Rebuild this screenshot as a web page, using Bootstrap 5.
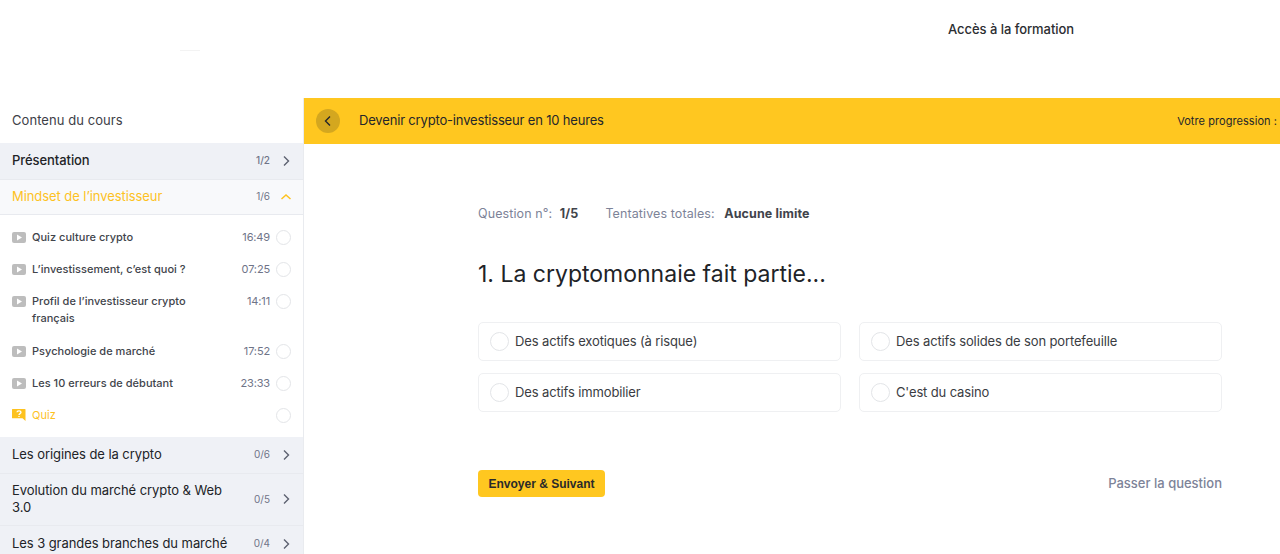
<!DOCTYPE html>
<html lang="fr">
<head>
<meta charset="utf-8">
<title>Quiz</title>
<link href="https://cdn.jsdelivr.net/npm/bootstrap@5.3.0/dist/css/bootstrap.min.css" rel="stylesheet">
<style>
html,body{height:100%;overflow:hidden;}
body{font-family:Inter,"Noto Sans",sans-serif;color:#212327;background:#fff;}
.top-head{height:98px;}
.logo-slot{width:304px;height:98px;}
.logo-mark{width:20px;height:1px;background:#f3f3f3;margin-left:180px;margin-top:50px;}
.access{margin-left:644px;margin-top:20px;font-size:13px;font-weight:500;line-height:18px;letter-spacing:-.05px;color:#2b2d31;}
.shell{height:456px;}
.side{width:304px;flex:none;border-right:1px solid #e9ebef;height:100%;overflow:hidden;}
.side-title{height:45px;padding-left:12px;font-size:13px;line-height:45px;letter-spacing:.06px;font-weight:400;color:#3d4047;}
.topic{background:#eff1f6;padding:0 12px;display:flex;align-items:center;border-bottom:1px solid #e8eaef;font-size:13px;line-height:17px;letter-spacing:-.07px;font-weight:400;color:#212327;}
.topic-name{flex:1;min-width:0;margin-top:-2px;}
.topic.one{height:37px;}
.topic.two{height:52px;}
.topic.first{height:37px;font-weight:500;}
.topic.open{height:35px;background:#f8f9fb;color:#fdc21f;}
.count{font-size:10px;color:#6f7488;width:28px;text-align:right;letter-spacing:0;margin-left:4px;margin-top:-1px;}
.chev{width:12px;height:12px;margin-left:10px;margin-right:-1px;margin-top:-1px;flex:none;}
.lessons{padding:6px 0 5px;height:222px;}
.lesson{display:flex;padding:0 12px;min-height:32px;align-items:center;font-size:11px;line-height:17px;letter-spacing:.02px;color:#41444b;font-weight:500;}
.lesson.tall{align-items:flex-start;padding-top:7.5px;min-height:50px;}
.les-icon{width:14px;height:11px;flex:none;margin-right:6px;}
.les-icon.ask{height:12px;}
.lesson.tall .les-icon{margin-top:3px;}
.les-name{flex:1;min-width:0;}
.les-time{font-size:11px;color:#6f7488;font-weight:400;letter-spacing:-.15px;}
.tick{width:15px;height:15px;border:1.5px solid #e3e5e8;border-radius:50%;margin-left:6px;flex:none;background:#fff;}
.lesson.tall .tick{margin-top:1px;}
.lesson.quizrow{color:#fdc21f;font-weight:400;}
.bar{height:46px;background:#ffc720;padding:0 3px 0 12px;}
.back{width:24px;height:24px;border-radius:50%;background:#d4a71f;margin-right:19px;flex:none;}
.bar-title{font-size:13px;letter-spacing:-.17px;color:#25262a;font-weight:400;}
.bar-prog{font-size:11px;letter-spacing:.06px;color:#25262a;font-weight:400;white-space:nowrap;}
.quiz{padding:59px 58px 0 174px;}
.meta{font-size:12.5px;line-height:22px;letter-spacing:.1px;color:#7d8398;}
.meta b{color:#41444b;font-weight:700;}
.meta .num{margin-left:4px;}
.meta .lim{margin-left:6px;}
.meta .sep{margin-left:27px;}
.qtitle{font-size:23px;font-weight:400;line-height:30px;color:#212327;margin:34px 0 33px;letter-spacing:0;}
.ans-grid{display:grid;grid-template-columns:1fr 1fr;column-gap:18px;row-gap:12px;}
.ans{height:39px;border:1px solid #eff0f2;border-radius:5px;display:flex;align-items:center;padding-left:11px;font-size:13px;letter-spacing:-.13px;color:#3a3c42;}
.ans-dot{width:19px;height:19px;border:1.5px solid #e3e5e8;border-radius:50%;margin-right:6px;flex:none;}
.foot{margin-top:58px;}
.send{background:#ffc720;border:0;border-radius:4px;height:27px;width:127px;padding:0;font-family:"Liberation Sans",sans-serif;font-weight:700;font-size:12px;color:#2a2a2a;}
.skip{font-size:13px;font-weight:500;color:#7d8398;letter-spacing:0;}
</style>
</head>
<body>
<header class="top-head d-flex">
  <div class="logo-slot"><div class="logo-mark"></div></div>
  <div class="access">Accès à la formation</div>
</header>
<div class="shell d-flex">
  <aside class="side">
    <div class="side-title">Contenu du cours</div>
    <div class="topic first"><span class="topic-name">Présentation</span><span class="count">1/2</span><svg class="chev" viewBox="0 0 12 12"><path d="M4 1.500 8.500 6 4 10.500" fill="none" stroke="#5d6170" stroke-width="1.400"/></svg></div>
    <div class="topic open"><span class="topic-name">Mindset de l’investisseur</span><span class="count">1/6</span><svg class="chev" viewBox="0 0 12 12"><path d="M1.500 8 6 4l4.500 4" fill="none" stroke="#fdc21f" stroke-width="1.500"/></svg></div>
    <div class="lessons">
      <div class="lesson"><svg class="les-icon" viewBox="0 0 14 11"><rect width="14" height="11" rx="2" fill="#bdbdbd"/><path d="M5 2.500v6L10 5.500z" fill="#fff"/></svg><span class="les-name">Quiz culture crypto</span><span class="les-time">16:49</span><span class="tick"></span></div>
      <div class="lesson"><svg class="les-icon" viewBox="0 0 14 11"><rect width="14" height="11" rx="2" fill="#bdbdbd"/><path d="M5 2.500v6L10 5.500z" fill="#fff"/></svg><span class="les-name">L’investissement, c’est quoi ?</span><span class="les-time">07:25</span><span class="tick"></span></div>
      <div class="lesson tall"><svg class="les-icon" viewBox="0 0 14 11"><rect width="14" height="11" rx="2" fill="#bdbdbd"/><path d="M5 2.500v6L10 5.500z" fill="#fff"/></svg><span class="les-name">Profil de l’investisseur crypto<br>français</span><span class="les-time">14:11</span><span class="tick"></span></div>
      <div class="lesson"><svg class="les-icon" viewBox="0 0 14 11"><rect width="14" height="11" rx="2" fill="#bdbdbd"/><path d="M5 2.500v6L10 5.500z" fill="#fff"/></svg><span class="les-name">Psychologie de marché</span><span class="les-time">17:52</span><span class="tick"></span></div>
      <div class="lesson"><svg class="les-icon" viewBox="0 0 14 11"><rect width="14" height="11" rx="2" fill="#bdbdbd"/><path d="M5 2.500v6L10 5.500z" fill="#fff"/></svg><span class="les-name">Les 10 erreurs de débutant</span><span class="les-time">23:33</span><span class="tick"></span></div>
      <div class="lesson quizrow"><svg class="les-icon ask" viewBox="0 0 14 12"><path d="M.5 0h12.500a.5.5 0 0 1 .5.5V12l-3-2.800H.5A.5.5 0 0 1 0 8.700V.5A.5.5 0 0 1 .5 0z" fill="#fdc21f"/><path d="M5 3.200C5.100 1.300 9 1.400 9 3.300 9 4.700 7 4.500 7 6M7 6.900v1.200" fill="none" stroke="#fff" stroke-width="1.300"/></svg><span class="les-name">Quiz</span><span class="tick"></span></div>
    </div>
    <div class="topic one"><span class="topic-name">Les origines de la crypto</span><span class="count">0/6</span><svg class="chev" viewBox="0 0 12 12"><path d="M4 1.500 8.500 6 4 10.500" fill="none" stroke="#5d6170" stroke-width="1.400"/></svg></div>
    <div class="topic two"><span class="topic-name">Evolution du marché crypto &amp; Web 3.0</span><span class="count">0/5</span><svg class="chev" viewBox="0 0 12 12"><path d="M4 1.500 8.500 6 4 10.500" fill="none" stroke="#5d6170" stroke-width="1.400"/></svg></div>
    <div class="topic one"><span class="topic-name">Les 3 grandes branches du marché</span><span class="count">0/4</span><svg class="chev" viewBox="0 0 12 12"><path d="M4 1.500 8.500 6 4 10.500" fill="none" stroke="#5d6170" stroke-width="1.400"/></svg></div>
  </aside>
  <main class="flex-grow-1" style="min-width:0">
    <div class="bar d-flex align-items-center">
      <span class="back d-flex align-items-center justify-content-center"><svg width="12" height="12" viewBox="0 0 12 12"><path d="M8 1.500 3.500 6 8 10.500" fill="none" stroke="#25262a" stroke-width="1.400"/></svg></span>
      <span class="bar-title flex-grow-1">Devenir crypto-investisseur en 10 heures</span>
      <span class="bar-prog">Votre progression :</span>
    </div>
    <section class="quiz">
      <div class="meta">Question n°: <b class="num">1/5</b><span class="sep">Tentatives totales:</span> <b class="lim">Aucune limite</b></div>
      <h1 class="qtitle">1. La cryptomonnaie fait partie...</h1>
      <div class="ans-grid">
        <div class="ans"><span class="ans-dot"></span>Des actifs exotiques (à risque)</div>
        <div class="ans"><span class="ans-dot"></span>Des actifs solides de son portefeuille</div>
        <div class="ans"><span class="ans-dot"></span>Des actifs immobilier</div>
        <div class="ans"><span class="ans-dot"></span>C'est du casino</div>
      </div>
      <div class="foot d-flex justify-content-between align-items-center">
        <button class="btn send" type="button">Envoyer &amp; Suivant</button>
        <a class="skip text-decoration-none" href="#">Passer la question</a>
      </div>
    </section>
  </main>
</div>
<script src="https://cdn.jsdelivr.net/npm/bootstrap@5.3.0/dist/js/bootstrap.bundle.min.js"></script>
</body>
</html>
